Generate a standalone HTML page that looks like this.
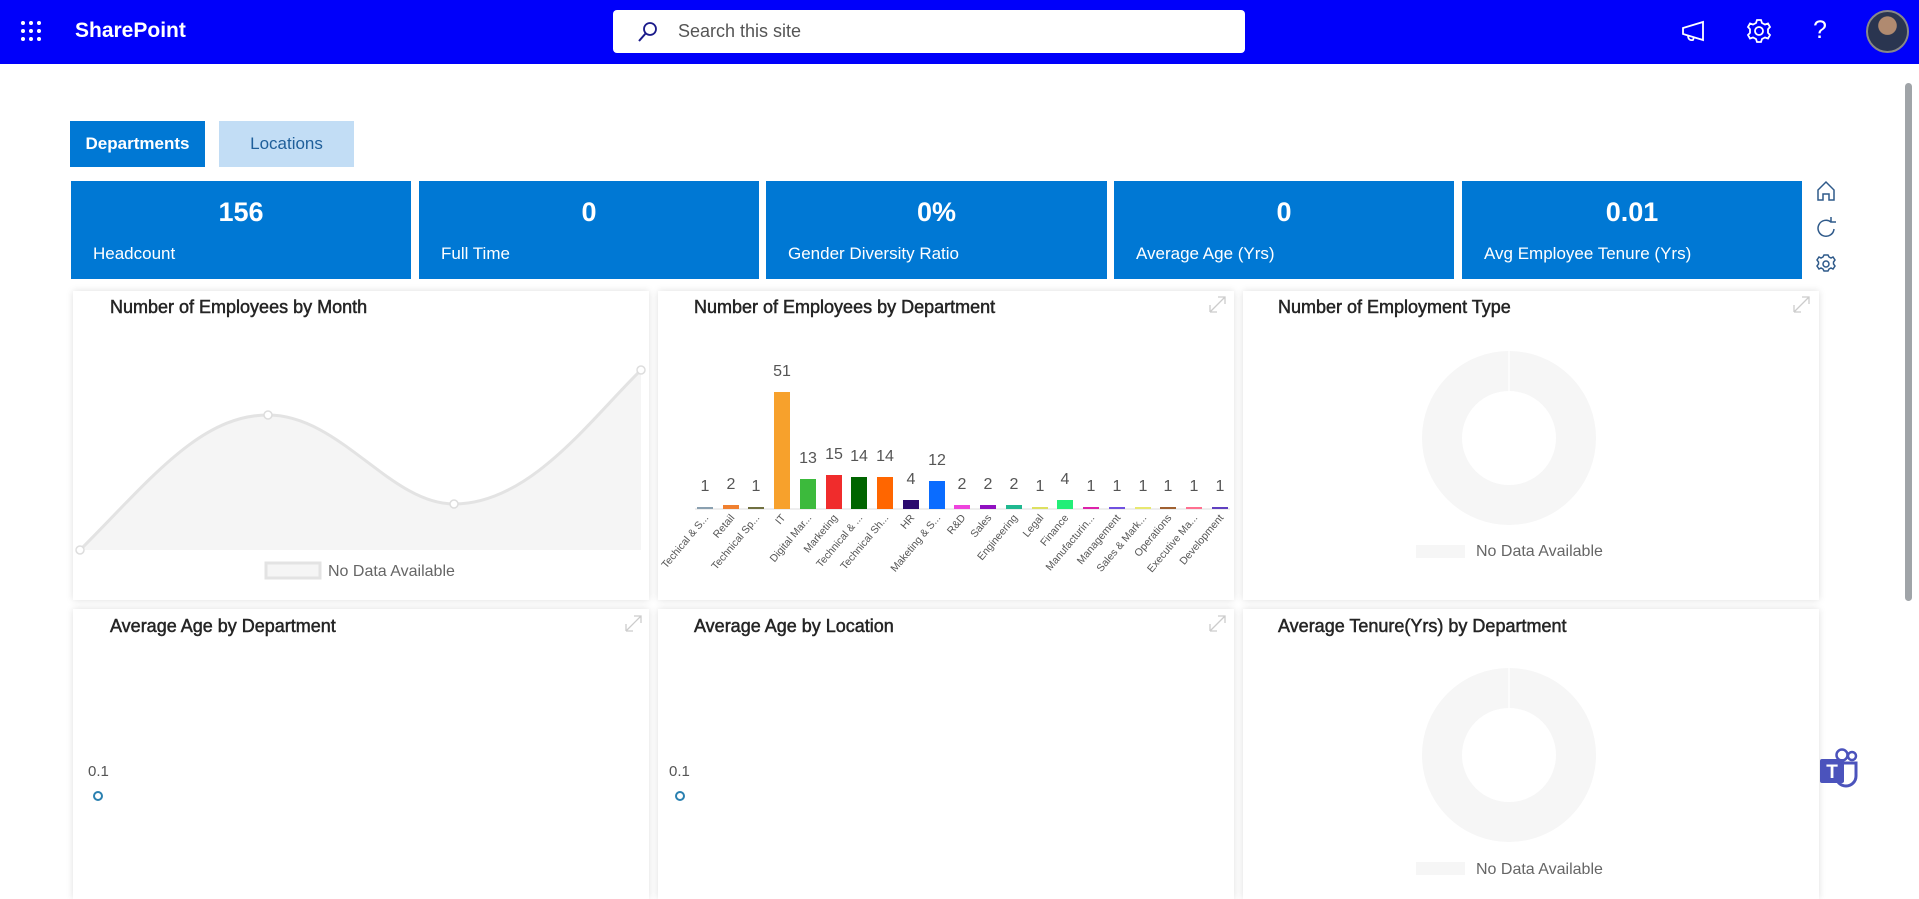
<!DOCTYPE html>
<html><head><meta charset="utf-8"><style>
*{box-sizing:border-box;margin:0;padding:0}
body{width:1919px;height:880px;overflow:hidden;background:#fff;font-family:"Liberation Sans",sans-serif;position:relative}
.hdr{position:absolute;left:0;top:0;width:1919px;height:64px;background:#0000fa}
.abs{position:absolute}
.search{left:613px;top:10px;width:632px;height:43px;background:#fff;border-radius:4px}
.tab{top:121px;height:46px;font-size:17px;display:flex;align-items:center;justify-content:center}
.kpi{top:181px;height:98px;background:#0078d4;color:#fff}
.kpi .v{position:absolute;top:16px;width:100%;text-align:center;font-size:27px;font-weight:bold}
.kpi .l{position:absolute;left:22px;top:63px;font-size:17px}
.panel{background:#fff;box-shadow:0 0 7px rgba(0,0,0,.13)}
.title{position:absolute;font-size:18px;color:#252525;-webkit-text-stroke:0.5px #252525}
</style></head><body>
<div class="hdr"></div>
<svg class="abs" style="left:20px;top:20px" width="24" height="24"><g fill="#fff"><circle cx="3" cy="3" r="2"/><circle cx="11" cy="3" r="2"/><circle cx="19" cy="3" r="2"/><circle cx="3" cy="11" r="2"/><circle cx="11" cy="11" r="2"/><circle cx="19" cy="11" r="2"/><circle cx="3" cy="19" r="2"/><circle cx="11" cy="19" r="2"/><circle cx="19" cy="19" r="2"/></g></svg>
<div class="abs" style="left:75px;top:19px;color:#fff;font-size:21px;font-weight:bold">SharePoint</div>
<div class="abs search"></div>
<svg class="abs" style="left:636px;top:20px" width="24" height="24"><circle cx="14" cy="9" r="6" fill="none" stroke="#1a1a8a" stroke-width="1.8"/><path d="M10 13 L3 21" stroke="#1a1a8a" stroke-width="2"/></svg>
<div class="abs" style="left:678px;top:21px;font-size:18px;color:#555">Search this site</div>
<svg class="abs" style="left:1680px;top:18px" width="28" height="28" fill="none" stroke="#fff" stroke-width="1.8"><path d="M3 10 L23 4 L23 22 L3 16 Z M8 17 Q8 23 13 22 L14 19"/></svg>
<svg class="abs" style="left:1746px;top:18px" width="26" height="26" fill="none" stroke="#fff" stroke-width="1.8"><circle cx="13" cy="13" r="4"/><path d="M11 2h4l1 3 3 1.5 3-1 2 3.5-2 2.2v3.6l2 2.2-2 3.5-3-1L16 21l-1 3h-4l-1-3-3-1.5-3 1-2-3.5 2-2.2v-3.6l-2-2.2 2-3.5 3 1L10 5z"/></svg>
<div class="abs" style="left:1813px;top:16px;color:#fff;font-size:25px">?</div>
<div class="abs" style="left:1866px;top:10px;width:43px;height:43px;border-radius:50%;background:radial-gradient(circle at 50% 35%,#b08a70 0 28%,#2a3550 30% 100%);border:2px solid #888"></div>
<div class="abs" style="left:1905px;top:83px;width:7px;height:518px;background:#a0a4a8;border-radius:4px"></div>

<div class="abs tab" style="left:70px;width:135px;background:#0078d4;color:#fff;font-weight:bold">Departments</div>
<div class="abs tab" style="left:219px;width:135px;background:#c2ddf5;color:#1f5f9a">Locations</div>

<div class="abs kpi" style="left:71px;width:340px"><div class="v">156</div><div class="l">Headcount</div></div>
<div class="abs kpi" style="left:419px;width:340px"><div class="v">0</div><div class="l">Full Time</div></div>
<div class="abs kpi" style="left:766px;width:341px"><div class="v">0%</div><div class="l">Gender Diversity Ratio</div></div>
<div class="abs kpi" style="left:1114px;width:340px"><div class="v">0</div><div class="l">Average Age (Yrs)</div></div>
<div class="abs kpi" style="left:1462px;width:340px"><div class="v">0.01</div><div class="l">Avg Employee Tenure (Yrs)</div></div>

<svg class="abs" style="left:1814px;top:178px" width="26" height="100" fill="none" stroke="#2f5a8a" stroke-width="1.5"><path d="M4 12 L12 4 L20 12 V22 H15 V16 H9 V22 H4 Z"/><path d="M20 51 A8 8 0 1 1 17 44 M17 39 V44 H22"/><circle cx="12" cy="86" r="3"/><path d="M10 77h4l1 2 2 1 2-1 2 3-1.5 2v2l1.5 2-2 3-2-1-2 1-1 2h-4l-1-2-2-1-2 1-2-3 1.5-2v-2L3 82l2-3 2 1 2-1z"/></svg>

<div class="abs panel" style="left:73px;top:291px;width:576px;height:309px"></div>
<div class="abs panel" style="left:658px;top:291px;width:576px;height:309px"></div>
<div class="abs panel" style="left:1243px;top:291px;width:576px;height:309px"></div>
<div class="abs panel" style="left:73px;top:609px;width:576px;height:290px"></div>
<div class="abs panel" style="left:658px;top:609px;width:576px;height:290px"></div>
<div class="abs panel" style="left:1243px;top:609px;width:576px;height:290px"></div>

<div class="title" style="left:110px;top:297px">Number of Employees by Month</div>
<div class="title" style="left:694px;top:297px">Number of Employees by Department</div>
<div class="title" style="left:1278px;top:297px">Number of Employment Type</div>
<div class="title" style="left:110px;top:616px">Average Age by Department</div>
<div class="title" style="left:694px;top:616px">Average Age by Location</div>
<div class="title" style="left:1278px;top:616px">Average Tenure(Yrs) by Department</div>

<svg class="abs" style="left:0;top:0" width="1919" height="880" font-family="Liberation Sans, sans-serif">
<g stroke="#ccc" stroke-width="1.3" fill="none">
<path d="M1210 312 L1225 297 M1218 297 H1225 V304 M1210 312 H1217 M1210 305 V312"/>
<path d="M1794 312 L1809 297 M1802 297 H1809 V304 M1794 312 H1801 M1794 305 V312"/>
<path d="M626 631 L641 616 M634 616 H641 V623 M626 631 H633 M626 624 V631"/>
<path d="M1210 631 L1225 616 M1218 616 H1225 V623 M1210 631 H1217 M1210 624 V631"/>
</g>
<path d="M80 550 C150 480 200 415 268 415 C340 415 390 504 454 504 C530 504 590 420 641 370 L641 550 Z" fill="#f5f5f5"/>
<path d="M80 550 C150 480 200 415 268 415 C340 415 390 504 454 504 C530 504 590 420 641 370" fill="none" stroke="#e3e3e3" stroke-width="3"/>
<g fill="#fff" stroke="#ddd" stroke-width="1.5"><circle cx="80" cy="550" r="4"/><circle cx="268" cy="415" r="4"/><circle cx="454" cy="504" r="4"/><circle cx="641" cy="370" r="4"/></g>
<rect x="266" y="563" width="54" height="15" fill="#f5f5f5" stroke="#e3e3e3" stroke-width="3"/>
<text x="328" y="576" font-size="16" fill="#666">No Data Available</text>

<line x1="695" y1="509" x2="1230" y2="509" stroke="#ddd"/>
<g font-size="16" fill="#555" text-anchor="middle">
<rect x="697" y="507" width="16" height="2" fill="#8aa0b0"/><text x="705" y="491">1</text>
<rect x="723" y="505" width="16" height="4" fill="#f08030"/><text x="731" y="489">2</text>
<rect x="748" y="507" width="16" height="2" fill="#707040"/><text x="756" y="491">1</text>
<rect x="774" y="392" width="16" height="117" fill="#f7a12c"/><text x="782" y="376">51</text>
<rect x="800" y="479" width="16" height="30" fill="#3cba3c"/><text x="808" y="463">13</text>
<rect x="826" y="475" width="16" height="34" fill="#f02c2c"/><text x="834" y="459">15</text>
<rect x="851" y="477" width="16" height="32" fill="#006400"/><text x="859" y="461">14</text>
<rect x="877" y="477" width="16" height="32" fill="#ff6600"/><text x="885" y="461">14</text>
<rect x="903" y="500" width="16" height="9" fill="#2a0a6e"/><text x="911" y="484">4</text>
<rect x="929" y="481" width="16" height="28" fill="#0a6cff"/><text x="937" y="465">12</text>
<rect x="954" y="505" width="16" height="4" fill="#ee44dd"/><text x="962" y="489">2</text>
<rect x="980" y="505" width="16" height="4" fill="#9010c0"/><text x="988" y="489">2</text>
<rect x="1006" y="505" width="16" height="4" fill="#20b890"/><text x="1014" y="489">2</text>
<rect x="1032" y="507" width="16" height="2" fill="#dde060"/><text x="1040" y="491">1</text>
<rect x="1057" y="500" width="16" height="9" fill="#22ee77"/><text x="1065" y="484">4</text>
<rect x="1083" y="507" width="16" height="2" fill="#dd22aa"/><text x="1091" y="491">1</text>
<rect x="1109" y="507" width="16" height="2" fill="#7050e0"/><text x="1117" y="491">1</text>
<rect x="1135" y="507" width="16" height="2" fill="#e8e870"/><text x="1143" y="491">1</text>
<rect x="1160" y="507" width="16" height="2" fill="#a06030"/><text x="1168" y="491">1</text>
<rect x="1186" y="507" width="16" height="2" fill="#ff7090"/><text x="1194" y="491">1</text>
<rect x="1212" y="507" width="16" height="2" fill="#6040c0"/><text x="1220" y="491">1</text>
</g>
<g font-size="10.5" fill="#555" text-anchor="end">
<text transform="translate(709,518) rotate(-50)">Techical &amp; S...</text>
<text transform="translate(735,518) rotate(-50)">Retail</text>
<text transform="translate(760,518) rotate(-50)">Technical Sp...</text>
<text transform="translate(786,518) rotate(-50)">IT</text>
<text transform="translate(812,518) rotate(-50)">Digital Mar...</text>
<text transform="translate(838,518) rotate(-50)">Marketing</text>
<text transform="translate(863,518) rotate(-50)">Technical &amp; ...</text>
<text transform="translate(889,518) rotate(-50)">Technical Sh...</text>
<text transform="translate(915,518) rotate(-50)">HR</text>
<text transform="translate(941,518) rotate(-50)">Maketing &amp; S...</text>
<text transform="translate(966,518) rotate(-50)">R&amp;D</text>
<text transform="translate(992,518) rotate(-50)">Sales</text>
<text transform="translate(1018,518) rotate(-50)">Engineering</text>
<text transform="translate(1044,518) rotate(-50)">Legal</text>
<text transform="translate(1069,518) rotate(-50)">Finance</text>
<text transform="translate(1095,518) rotate(-50)">Manufacturin...</text>
<text transform="translate(1121,518) rotate(-50)">Management</text>
<text transform="translate(1147,518) rotate(-50)">Sales &amp; Mark...</text>
<text transform="translate(1172,518) rotate(-50)">Operations</text>
<text transform="translate(1198,518) rotate(-50)">Executive Ma...</text>
<text transform="translate(1224,518) rotate(-50)">Development</text>
</g>

<circle cx="1509" cy="438" r="67" fill="none" stroke="#f6f6f6" stroke-width="40"/>
<line x1="1509" y1="351" x2="1509" y2="391" stroke="#fff" stroke-width="1.5"/>
<rect x="1416" y="545" width="49" height="13" fill="#f6f6f6"/>
<text x="1476" y="556" font-size="16" fill="#666">No Data Available</text>

<circle cx="1509" cy="755" r="67" fill="none" stroke="#f6f6f6" stroke-width="40"/>
<line x1="1509" y1="668" x2="1509" y2="708" stroke="#fff" stroke-width="1.5"/>
<rect x="1416" y="862" width="49" height="13" fill="#f6f6f6"/>
<text x="1476" y="874" font-size="16" fill="#666">No Data Available</text>

<text x="88" y="776" font-size="15" fill="#555">0.1</text>
<circle cx="98" cy="796" r="4" fill="#fff" stroke="#2a80b0" stroke-width="2"/>
<text x="669" y="776" font-size="15" fill="#555">0.1</text>
<circle cx="680" cy="796" r="4" fill="#fff" stroke="#2a80b0" stroke-width="2"/>

<g transform="translate(1818,746)">
<circle cx="34" cy="10" r="4" fill="none" stroke="#4b53bc" stroke-width="2.5"/>
<circle cx="24" cy="9" r="5.5" fill="none" stroke="#4b53bc" stroke-width="2.5"/>
<path d="M18 17 H38 V30 A10 10 0 0 1 18 30 Z" fill="none" stroke="#4b53bc" stroke-width="3"/>
<rect x="2" y="13" width="24" height="24" rx="2" fill="#4b53bc"/>
<text x="14" y="32" font-size="19" font-weight="bold" fill="#fff" text-anchor="middle">T</text>
</g>
</svg>
</body></html>
